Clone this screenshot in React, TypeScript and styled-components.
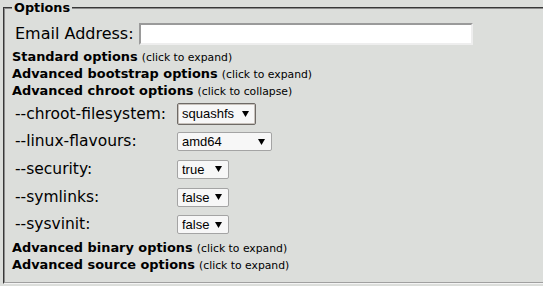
import React from 'react';
import styled, { createGlobalStyle } from 'styled-components';

const GlobalStyle = createGlobalStyle`
  html, body {
    margin: 0;
    padding: 0;
    background: #dcdedb;
    overflow: hidden;
  }
  body {
    font-family: "DejaVu Sans", sans-serif;
    color: #000;
  }
`;

const Page = styled.div`
  width: 543px;
  height: 286px;
  overflow: hidden;
`;

const Fieldset = styled.fieldset`
  width: 560px;
  margin: 0 0 0 3px;
  padding: 0 7px 8px 7px;
  border: 2px groove #f4f4f4;
  border-color: #8c8c8c #f4f4f4 #f4f4f4 #8c8c8c;
  border-style: groove;
`;

const Legend = styled.legend`
  padding: 0 2px;
  font-weight: bold;
  font-size: 12.8px;
  line-height: 15px;
`;

const EmailRow = styled.div`
  display: flex;
  align-items: center;
  gap: 5px;
  padding: 8px 0 4px 3px;
`;

const BigLabel = styled.label`
  font-size: 16px;
  line-height: 20px;
`;

const TextInput = styled.input`
  box-sizing: border-box;
  width: 334px;
  height: 22px;
  margin: 0;
  border: 2px solid;
  border-color: #9a9a9a #eeeeee #eeeeee #9a9a9a;
  background: #fff;
  font-size: 13px;
`;

const Toggle = styled.div`
  font-size: 12.9px;
  line-height: 16px;
  cursor: pointer;
`;

const ToggleTitle = styled.span`
  font-weight: bold;
`;

const Hint = styled.span`
  font-size: 10.8px;
`;

const OptionTable = styled.table`
  border-collapse: collapse;
  margin: 0 0 2px 3px;
`;

const OptionRow = styled.tr`
  height: 27.6px;
`;

const OptionLabel = styled.td`
  width: 162px;
  padding: 0;
  font-size: 15.5px;
  vertical-align: middle;
`;

const OptionCell = styled.td`
  padding: 0;
  vertical-align: middle;
`;

const SelectWrap = styled.span<{ $width: number }>`
  position: relative;
  display: inline-block;
  vertical-align: middle;
  width: ${p => p.$width}px;
`;

const Arrow = styled.svg`
  position: absolute;
  right: 7px;
  top: 50%;
  margin-top: -3px;
  width: 7px;
  height: 6px;
  pointer-events: none;
`;

const Select = styled.select<{ $focused?: boolean }>`
  appearance: none;
  -webkit-appearance: none;
  display: block;
  box-sizing: border-box;
  width: 100%;
  height: ${p => (p.$focused ? 22 : 19)}px;
  margin: 0;
  padding: 0 0 0 4px;
  border: 1px solid ${p => (p.$focused ? '#6e6a66' : '#a4a4a4')};
  box-shadow: ${p => (p.$focused ? 'inset 0 0 0 1px #c8c2bc' : 'none')};
  border-radius: 2px;
  background: #f7f7f7;
  color: #000;
  font-family: "Liberation Sans", Arial, sans-serif;
  font-size: 13px;
`;

interface SectionProps {
  title: string;
  open?: boolean;
}

const Section: React.FC<SectionProps> = ({ title, open }) => (
  <Toggle>
    <ToggleTitle>{title}</ToggleTitle>{' '}
    <Hint>(click to {open ? 'collapse' : 'expand'})</Hint>
  </Toggle>
);

const chrootOptions = [
  { name: '--chroot-filesystem:', value: 'squashfs', values: ['squashfs', 'ext4', 'none'], width: 79, focused: true },
  { name: '--linux-flavours:', value: 'amd64', values: ['amd64', '486', '686-pae'], width: 95 },
  { name: '--security:', value: 'true', values: ['true', 'false'], width: 52 },
  { name: '--symlinks:', value: 'false', values: ['true', 'false'], width: 52 },
  { name: '--sysvinit:', value: 'false', values: ['true', 'false'], width: 52 },
];

export default function App() {
  return (
    <Page>
      <GlobalStyle />
      <Fieldset>
        <Legend>Options</Legend>
        <EmailRow>
          <BigLabel htmlFor="email">Email Address:</BigLabel>
          <TextInput id="email" type="text" />
        </EmailRow>
        <Section title="Standard options" />
        <Section title="Advanced bootstrap options" />
        <Section title="Advanced chroot options" open />
        <OptionTable>
          <tbody>
            {chrootOptions.map(opt => (
              <OptionRow key={opt.name}>
                <OptionLabel>{opt.name}</OptionLabel>
                <OptionCell>
                  <SelectWrap $width={opt.width}>
                    <Select defaultValue={opt.value} $focused={opt.focused}>
                      {opt.values.map(v => (
                        <option key={v} value={v}>{v}</option>
                      ))}
                    </Select>
                    <Arrow viewBox="0 0 7 6">
                      <path d="M0 0H7L3.5 6Z" fill="#000" />
                    </Arrow>
                  </SelectWrap>
                </OptionCell>
              </OptionRow>
            ))}
          </tbody>
        </OptionTable>
        <Section title="Advanced binary options" />
        <Section title="Advanced source options" />
      </Fieldset>
    </Page>
  );
}
